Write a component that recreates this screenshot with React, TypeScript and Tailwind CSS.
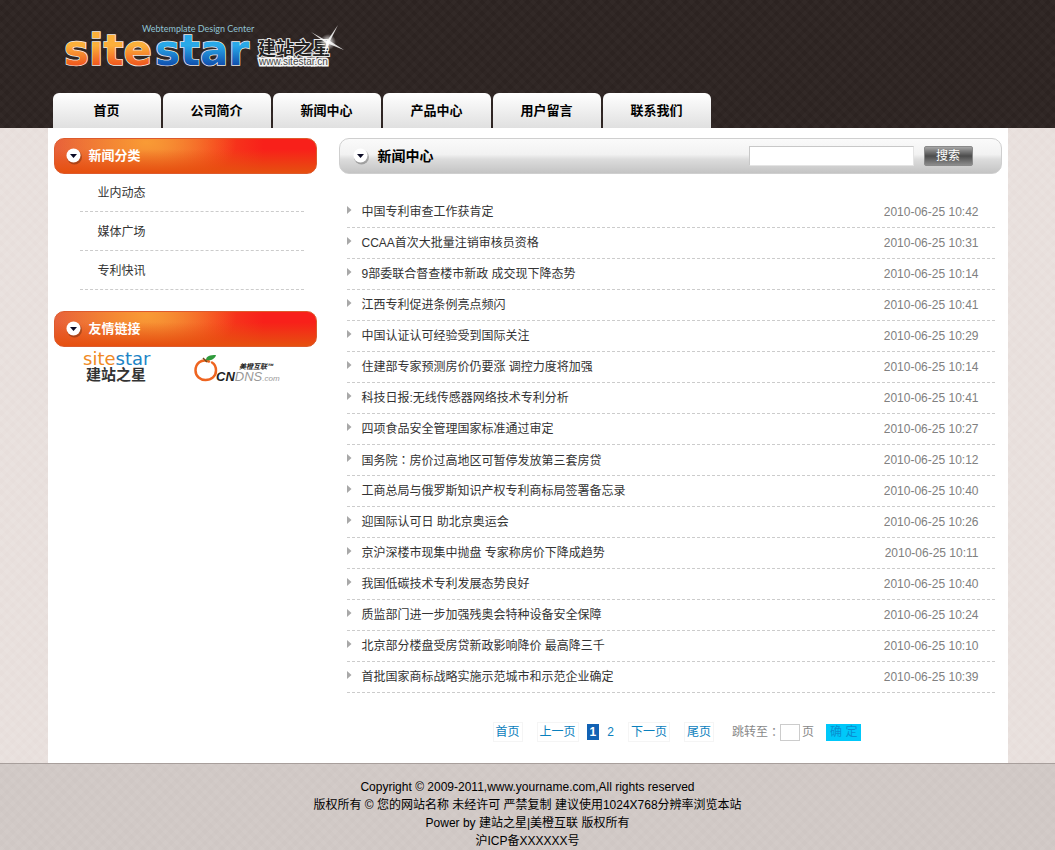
import type { ReactNode } from 'react';

interface NewsItem {
  title: string;
  date: string;
}

const navItems = ['首页', '公司简介', '新闻中心', '产品中心', '用户留言', '联系我们'];

const categories = ['业内动态', '媒体广场', '专利快讯'];

const news: NewsItem[] = [
  { title: '中国专利审查工作获肯定', date: '2010-06-25 10:42' },
  { title: 'CCAA首次大批量注销审核员资格', date: '2010-06-25 10:31' },
  { title: '9部委联合督查楼市新政 成交现下降态势', date: '2010-06-25 10:14' },
  { title: '江西专利促进条例亮点频闪', date: '2010-06-25 10:41' },
  { title: '中国认证认可经验受到国际关注', date: '2010-06-25 10:29' },
  { title: '住建部专家预测房价仍要涨 调控力度将加强', date: '2010-06-25 10:14' },
  { title: '科技日报:无线传感器网络技术专利分析', date: '2010-06-25 10:41' },
  { title: '四项食品安全管理国家标准通过审定', date: '2010-06-25 10:27' },
  { title: '国务院：房价过高地区可暂停发放第三套房贷', date: '2010-06-25 10:12' },
  { title: '工商总局与俄罗斯知识产权专利商标局签署备忘录', date: '2010-06-25 10:40' },
  { title: '迎国际认可日 助北京奥运会', date: '2010-06-25 10:26' },
  { title: '京沪深楼市现集中抛盘 专家称房价下降成趋势', date: '2010-06-25 10:11' },
  { title: '我国低碳技术专利发展态势良好', date: '2010-06-25 10:40' },
  { title: '质监部门进一步加强残奥会特种设备安全保障', date: '2010-06-25 10:24' },
  { title: '北京部分楼盘受房贷新政影响降价 最高降三千', date: '2010-06-25 10:10' },
  { title: '首批国家商标战略实施示范城市和示范企业确定', date: '2010-06-25 10:39' },
];

function Logo() {
  return (
    <svg width="290" height="56" viewBox="0 0 290 56" role="img" aria-label="sitestar">
      <defs>
        <linearGradient id="orange" x1="0" y1="0" x2="0" y2="1">
          <stop offset="0.4" stopColor="#fbb03b" />
          <stop offset="0.8" stopColor="#f0561d" />
        </linearGradient>
        <linearGradient id="blue" x1="0" y1="0" x2="0" y2="1">
          <stop offset="0.4" stopColor="#29a9e8" />
          <stop offset="0.8" stopColor="#0f4fae" />
        </linearGradient>
        <radialGradient id="glow">
          <stop offset="0" stopColor="#ffffff" />
          <stop offset="1" stopColor="#ffffff" stopOpacity="0" />
        </radialGradient>
      </defs>
      <text
        x="5"
        y="44"
        fontSize="42"
        fontWeight="700"
        stroke="#f3ece6"
        strokeWidth="1.500"
        paintOrder="stroke"
        className="font-['DejaVu_Sans',sans-serif]"
      >
        <tspan fill="url(#orange)">site</tspan>
        <tspan x="96" fill="url(#blue)">star</tspan>
      </text>
      <text x="83" y="11" fontSize="9" fill="#8fc3d3" className="font-[Lato,sans-serif]">
        Webtemplate Design Center
      </text>
      <text
        x="199"
        y="34"
        fontSize="18"
        fontWeight="700"
        fill="#222222"
        stroke="#e8e8e8"
        strokeWidth="2"
        paintOrder="stroke"
        className="font-['Noto_Sans_CJK_SC',sans-serif]"
      >
        建站之星
      </text>
      <text
        x="200"
        y="44"
        fontSize="10"
        fill="#444444"
        stroke="#f4f4f4"
        strokeWidth="3"
        paintOrder="stroke"
        className="font-['Liberation_Sans',sans-serif]"
      >
        www.sitestar.cn
      </text>
      <circle cx="269" cy="21" r="8" fill="url(#glow)" />
      <path
        d="M252 11l16 9 11-16-8 16 14 9-15-6-5 12 2-13-15-11z"
        fill="#ffffff"
        opacity="0.85"
      />
    </svg>
  );
}

function ArrowBadge() {
  return (
    <svg width="18" height="18" viewBox="0 0 18 18" aria-hidden="true">
      <circle cx="9.5" cy="10" r="7.5" fill="#000000" opacity="0.25" />
      <circle cx="8.5" cy="8.5" r="7" fill="#ffffff" />
      <path d="M5 7h7l-3.500 4z" fill="#0b0b25" />
    </svg>
  );
}

// full-width colon drawn in the middle of its cell
function Colon() {
  return <span className="font-['Noto_Sans_CJK_TC',sans-serif]">：</span>;
}

function NewsTitle({ title }: { title: string }) {
  const [head, tail] = title.split('：');
  if (tail === undefined) return <>{title}</>;
  return <>{head}<Colon />{tail}</>;
}

function SideTitle({ children }: { children: ReactNode }) {
  return (
    <h2 className="flex h-9 items-center gap-1.5 rounded-[10px] border border-[#dd5a2c] bg-[linear-gradient(to_bottom,#e6500f00_30%,#e6500f_100%),radial-gradient(ellipse_90px_50px_at_35%_10%,#f99b35_0%,#f99b3500_100%),linear-gradient(to_right,#e8623a_0%,#ee6a2c_40%,#f5421c_60%,#f8201a_80%)] pl-2.5 text-[13px] font-bold text-white">
      <ArrowBadge />
      {children}
    </h2>
  );
}

function SitestarBadge() {
  return (
    <svg width="76" height="38" viewBox="0 0 76 38" role="img" aria-label="建站之星">
      <text x="1" y="17" fontSize="18" className="font-['DejaVu_Sans',sans-serif]">
        <tspan fill="#f08a24">site</tspan>
        <tspan fill="#1d84c6">star</tspan>
      </text>
      <text x="4" y="32" fontSize="15" fontWeight="700" fill="#333333" className="font-['Noto_Sans_CJK_SC',sans-serif]">
        建站之星
      </text>
    </svg>
  );
}

function CndnsBadge() {
  return (
    <svg width="90" height="38" viewBox="0 -6 90 38" role="img" aria-label="美橙互联">
      <path d="M15 7.500C7 4 1.500 10 1.500 16.500c0 6 5 9.500 10 9.500 6 0 10.500-4 10.500-9.500 0-3.500-1.500-6.500-4-8" fill="none" stroke="#ee6420" strokeWidth="2.500" strokeLinecap="round" />
      <path d="M12 6c0-4 4-5 10-5-1 4-5 6-10 5z" fill="#2f9a3c" />
      <path d="M9 4l4 4" stroke="#6a4a1c" strokeWidth="1.500" />
      <text x="22" y="27" fontSize="13" fontStyle="italic" className="font-['Liberation_Sans',sans-serif]">
        <tspan fill="#222222" fontWeight="700">CN</tspan>
        <tspan fill="#999999">DNS</tspan>
        <tspan fill="#999999" fontSize="8">.com</tspan>
      </text>
      <text x="45" y="15" fontSize="7" fontWeight="700" fontStyle="italic" fill="#222222" className="font-['Noto_Sans_CJK_SC',sans-serif]">
        美橙互联™
      </text>
    </svg>
  );
}

function Sidebar() {
  return (
    <aside className="w-[263px] shrink-0">
      <SideTitle>新闻分类</SideTitle>
      <ul className="-mt-px mr-[13px] mb-[21px] ml-[26px]">
        {categories.map(name => (
          <li key={name} className="flex h-[39px] items-center border-b border-dashed border-[#cccccc] pt-0.5 pl-[18px]">
            <a href="#" className="text-[#333333]">{name}</a>
          </li>
        ))}
      </ul>
      <SideTitle>友情链接</SideTitle>
      <div className="flex gap-9 pt-px pl-7">
        <a href="#"><SitestarBadge /></a>
        <a href="#"><CndnsBadge /></a>
      </div>
    </aside>
  );
}

function Pager() {
  return (
    <nav className="flex items-center justify-center pt-[29px] pb-[21px] pl-3.5 text-[#0a80bd]">
      <a href="#" className="mr-3.5 border border-[#f5f5f5] px-0.5">首页</a>
      <a href="#" className="mr-2 border border-[#f5f5f5] px-0.5">上一页</a>
      <span className="mr-2 bg-[#1162b4] px-[3px] leading-4 font-bold text-white">1</span>
      <a href="#" className="mr-3.5">2</a>
      <a href="#" className="mr-3.5 border border-[#f5f5f5] px-0.5">下一页</a>
      <a href="#" className="mr-[18px] border border-[#f5f5f5] px-0.5">尾页</a>
      <label className="flex items-center text-[#888888]">
        跳转至<Colon />
        <input type="text" className="mr-0.5 h-[17px] w-5 border border-[#cccccc] bg-white" />
        页
      </label>
      <button type="button" className="ml-3 h-[17px] bg-[#00c8fa] px-1 leading-[17px] whitespace-pre text-[#0a8ed0]">确 定</button>
    </nav>
  );
}

function NewsPanel() {
  return (
    <main className="min-w-0 flex-1">
      <div className="flex h-9 items-center rounded-[10px] border border-[#cfcfcf] bg-[linear-gradient(to_bottom,#fafafa_0%,#f2f2f2_45%,#dcdcdc_60%,#c4c4c4_100%)] pr-7 pl-3">
        <ArrowBadge />
        <h1 className="ml-2 flex-1 text-sm font-bold text-black">新闻中心</h1>
        <form className="flex items-center gap-2.5">
          <input
            type="text"
            aria-label="搜索"
            className="h-5 w-[165px] border border-[#e4e4e4] border-t-[#c8c8c8] border-l-[#c8c8c8] bg-white px-1"
          />
          <button
            type="button"
            className="h-5 w-[49px] rounded-xs border border-[#8a8a8a] bg-[linear-gradient(to_bottom,#a6a6a6_0%,#4c4c4c_50%,#8c8c8c_100%)] leading-[18px] text-white"
          >
            搜索
          </button>
        </form>
      </div>
      <ul className="mt-[23px] mr-[7px] ml-2">
        {news.map(item => (
          <li key={item.title} className="flex h-[31px] items-center border-b border-dashed border-[#cccccc] pr-4">
            <svg width="5" height="8" viewBox="0 0 5 8" className="mr-2.5 mb-1" aria-hidden="true">
              <path d="M0 0l4.500 4L0 8z" fill="#a8a8a8" />
            </svg>
            <a href="#" className="flex-1 text-[#333333]"><NewsTitle title={item.title} /></a>
            <span className="text-[#808080]">{item.date}</span>
          </li>
        ))}
      </ul>
      <Pager />
    </main>
  );
}

export default function App() {
  return (
    <div className="bg-[#e7dedb] bg-[repeating-linear-gradient(45deg,#ffffff10_0_4px,transparent_4px_8px),repeating-linear-gradient(-45deg,#ffffff10_0_4px,transparent_4px_8px)] font-['Liberation_Sans','Noto_Sans_CJK_SC',sans-serif] text-xs leading-[18px] text-[#333333]">
      <header className="bg-[#2c2321] bg-[repeating-linear-gradient(45deg,#ffffff04_0_4px,transparent_4px_8px),repeating-linear-gradient(-45deg,#ffffff04_0_4px,transparent_4px_8px)]">
        <div className="mx-auto max-w-[960px]">
          <a href="#" className="block pt-[21px] pb-4 pl-[11px]"><Logo /></a>
          <nav className="flex gap-0.5 pl-[5px]">
            {navItems.map(name => (
              <a
                key={name}
                href="#"
                className="h-[35px] w-[108px] rounded-t-md bg-linear-to-b from-white to-[#e0e0e0] text-center text-[13px] leading-[35px] font-bold text-black"
              >
                {name}
              </a>
            ))}
          </nav>
        </div>
      </header>

      <div className="mx-auto flex max-w-[960px] gap-[22px] bg-white pt-2.5 pr-1.5 pl-1.5">
        <Sidebar />
        <NewsPanel />
      </div>

      <footer className="border-t border-[#a89f9c] bg-[#cfc7c4] bg-[repeating-linear-gradient(45deg,#ffffff0a_0_4px,transparent_4px_8px),repeating-linear-gradient(-45deg,#ffffff0a_0_4px,transparent_4px_8px)] pt-3.5 text-center text-black">
        <p>Copyright © 2009-2011,www.yourname.com,All rights reserved</p>
        <p>版权所有 © 您的网站名称 未经许可 严禁复制 建议使用1024X768分辨率浏览本站</p>
        <p>Power by <a href="#">建站之星</a>|<a href="#">美橙互联</a> 版权所有</p>
        <p>沪ICP备XXXXXX号</p>
      </footer>
    </div>
  );
}
